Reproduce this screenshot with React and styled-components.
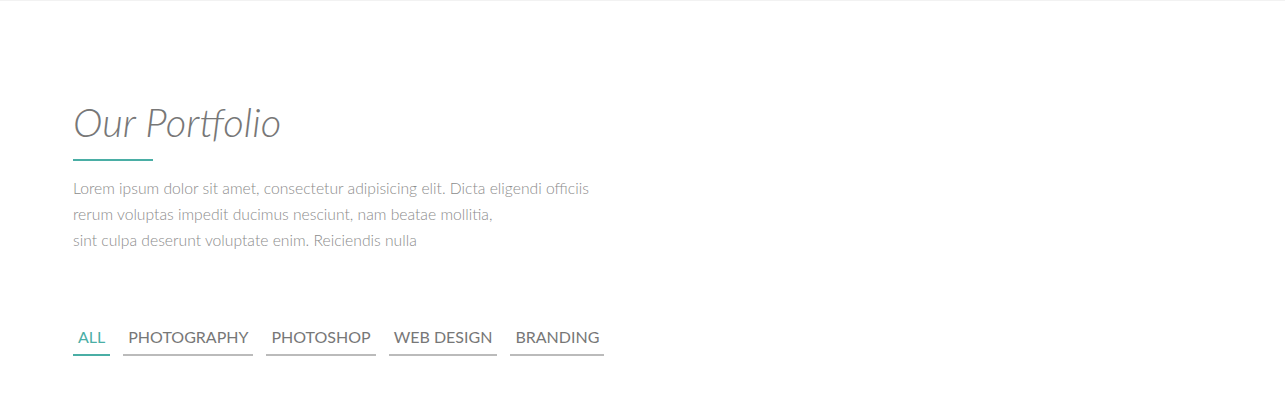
import React, { useState } from 'react';
import styled, { createGlobalStyle } from 'styled-components';

const GlobalStyle = createGlobalStyle`
  html, body {
    margin: 0;
    padding: 0;
    background: #fff;
  }
  body {
    font-family: Lato, "Open Sans", sans-serif;
  }
`;

const Section = styled.section`
  border-top: 1px solid #f2f2f2;
  padding: 97px 73px 0;
  height: 405px;
  box-sizing: border-box;
`;

const Title = styled.h2`
  margin: 0;
  font-family: Lato, sans-serif;
  font-style: italic;
  font-weight: 300;
  font-size: 40px;
  line-height: 48px;
  color: #777;
`;

const Rule = styled.div`
  width: 80px;
  height: 2px;
  background: #4aaea5;
  margin: 13px 0 14px;
`;

const Text = styled.p`
  margin: 0;
  font-weight: 300;
  font-size: 15.7px;
  line-height: 26px;
  color: #8c8c8c;
`;

const Filters = styled.ul`
  list-style: none;
  display: flex;
  gap: 13px;
  margin: 73px 0 0;
  padding: 0;
`;

const Filter = styled.li`
  font-size: 16px;
  line-height: 22px;
  padding: 0 5px 6px;
  text-transform: uppercase;
  color: ${(p) => (p.$active ? '#4aaea5' : '#777')};
  border-bottom: 2px solid ${(p) => (p.$active ? '#4aaea5' : '#bbb')};
  cursor: pointer;
`;

const items = ['All', 'Photography', 'Photoshop', 'Web Design', 'Branding'];

export default function App() {
  const [active, setActive] = useState('All');
  return (
    <>
      <GlobalStyle />
      <Section>
        <Title>Our Portfolio</Title>
        <Rule />
        <Text>
          Lorem ipsum dolor sit amet, consectetur adipisicing elit. Dicta eligendi officiis
          <br />
          rerum voluptas impedit ducimus nesciunt, nam beatae mollitia,
          <br />
          sint culpa deserunt voluptate enim. Reiciendis nulla
        </Text>
        <Filters>
          {items.map((item) => (
            <Filter key={item} $active={item === active} onClick={() => setActive(item)}>
              {item}
            </Filter>
          ))}
        </Filters>
      </Section>
    </>
  );
}
